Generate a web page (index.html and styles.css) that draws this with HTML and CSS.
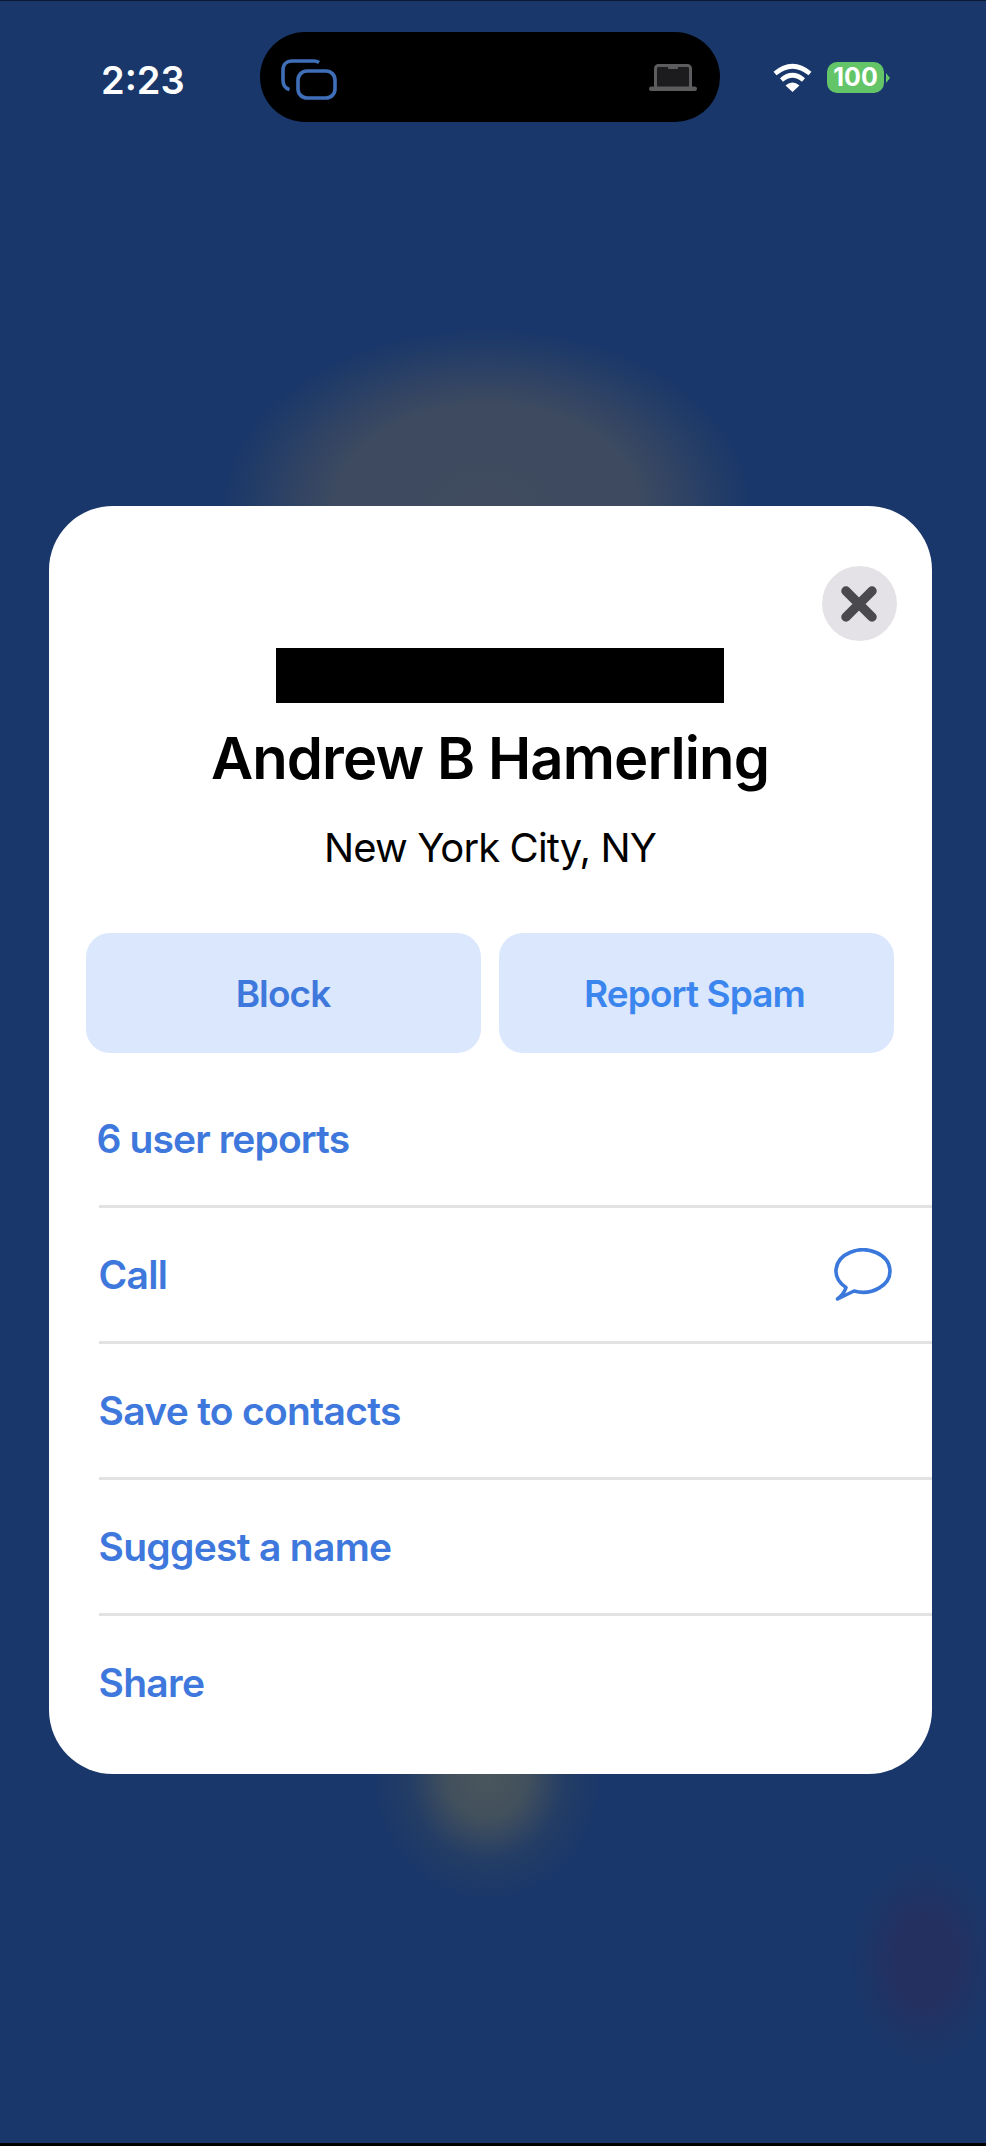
FILE: index.html
```html
<!DOCTYPE html>
<html lang="en">
<head>
    <meta charset="UTF-8">
    <title>Andrew B Hamerling</title>
    <link rel="stylesheet" href="styles.css">
</head>
<body>

<div class="screen">
    <div class="status-bar">
        <span class="time">2:23</span>
        <div class="island">
            <svg class="icon-windows" width="56" height="41" viewBox="0 0 56 41" fill="none" stroke="#3f6fb8" stroke-width="3.6">
                <path d="M38 3.5C36.5 2.4 35 2 33 2H11C5.5 2 2 5.5 2 11V21C2 26.5 4.5 29.5 8.5 30.5"/>
                <rect x="17" y="12" width="37" height="27" rx="9"/>
            </svg>
            <svg class="icon-laptop" width="48" height="27" viewBox="0 0 48 27">
                <path d="M6.5 23V4.5A3 3 0 0 1 9.5 1.5H38.5A3 3 0 0 1 41.5 4.5V23" fill="#1c1c1e" stroke="#5c5c5e" stroke-width="3"/>
                <rect x="19" y="2" width="10" height="3" rx="1" fill="#5c5c5e"/>
                <rect x="0" y="22.5" width="48" height="4.5" rx="2.2" fill="#5c5c5e"/>
            </svg>
        </div>
        <div class="status-right">
            <svg width="39" height="29" viewBox="0 0 39 29" fill="none" stroke="#fff" stroke-width="4.6">
                <path d="M2 10.5Q19.5 -4 37 10.5"/>
                <path d="M8.5 17Q19.5 7.5 30.5 17"/>
                <path d="M19.5 29L12.5 22.5Q19.5 16.5 26.5 22.5Z" fill="#fff" stroke="none"/>
            </svg>
            <div class="battery">100</div>
            <div class="battery-nub"></div>
        </div>
    </div>

    <div class="card">
        <div class="card-top">
            <button class="close-btn">
                <svg width="36" height="36" viewBox="0 0 36 36" stroke="#4a494e" stroke-width="9.5" stroke-linecap="round">
                    <path d="M5 5L31 31M31 5L5 31"/>
                </svg>
            </button>
        </div>
        <div class="redacted"></div>
        <h1 class="name">Andrew B Hamerling</h1>
        <p class="location">New York City, NY</p>
        <div class="actions">
            <button class="action-btn btn-block">Block</button>
            <button class="action-btn btn-spam">Report Spam</button>
        </div>
        <ul class="menu">
            <li class="menu-row reports">6 user reports</li>
            <li class="menu-row">
                Call
                <svg class="icon-chat" width="58" height="53" viewBox="0 0 58 53" fill="none" stroke="#3a78dc" stroke-width="3.6" stroke-linejoin="round">
                    <path d="M12 39.5A27 21.2 0 1 1 20 43L3.5 51Q10 46 12 39.5Z"/>
                </svg>
            </li>
            <li class="menu-row">Save to contacts</li>
            <li class="menu-row">Suggest a name</li>
            <li class="menu-row">Share</li>
        </ul>
    </div>
</div>

</body>
</html>
```

FILE: styles.css
```css
html, body { margin: 0; padding: 0; }
body { font-family: 'Inter', 'Liberation Sans', sans-serif; background: #000; }

.screen {
    box-sizing: border-box;
    height: 2146px;
    border-top: 1px solid #0b1a33;
    border-bottom: 3px solid #000;
    background-color: #19376a;
    background-image:
        radial-gradient(ellipse 265px 178px at 487px 506px, #404b5f 0%, #3d4a60 58%, rgba(25, 55, 106, 0) 100%),
        radial-gradient(ellipse 115px 125px at 487px 1775px, #4a565c 0%, #42505d 35%, rgba(38, 62, 100, 0.8) 68%, rgba(25, 55, 106, 0) 100%),
        radial-gradient(ellipse 75px 105px at 925px 1960px, #243060 0%, #243060 35%, rgba(25, 55, 106, 0) 100%);
}

.status-bar { display: flex; align-items: flex-start; padding-top: 31px; height: 505px; box-sizing: border-box; }
.time { width: 260px; box-sizing: border-box; padding-left: 101px; margin-top: 25px; font-size: 38px; line-height: 46px; font-weight: 600; color: #fff; }
.island { display: flex; justify-content: space-between; width: 460px; height: 90px; box-sizing: border-box; padding: 27px 23px 0 21px; border-radius: 45px; background: #000; }
.icon-laptop { margin-top: 5px; }
.status-right { display: flex; align-items: center; margin: 30px 0 0 53px; }
.battery { width: 57px; height: 31px; margin-left: 15px; border-radius: 10px; background: #63c568; color: #fff; font-size: 25px; font-weight: 700; line-height: 31px; text-align: center; }
.battery-nub { width: 0; height: 0; margin-left: 2px; border-left: 4px solid #63c568; border-top: 5px solid transparent; border-bottom: 5px solid transparent; }

.card { width: 883px; height: 1268px; margin: 0 0 0 48.5px; border-radius: 64px; background: #fff; overflow: hidden; }
.card-top { display: flex; justify-content: flex-end; padding: 60px 35px 0 0; }
.close-btn { display: flex; align-items: center; justify-content: center; width: 75px; height: 75px; padding: 0; border: none; border-radius: 50%; background: #e4e2e6; }

.redacted { width: 448px; height: 55px; margin: 7px 0 0 227.5px; background: #000; }
.name { margin: 20px 0 0; font-size: 58px; line-height: 70px; font-weight: 600; letter-spacing: -0.9px; color: #000; text-align: center; }
.location { margin: 30px 0 0; font-size: 40px; line-height: 50px; font-weight: 400; letter-spacing: -0.9px; color: #000; text-align: center; }

.actions { display: flex; gap: 18px; margin: 60px 37px 0; }
.action-btn { width: 395px; height: 120px; padding: 0; border: none; border-radius: 24px; background: #dbe7fd; font-family: inherit; font-size: 37px; font-weight: 600; letter-spacing: -0.9px; }
.btn-block { color: #3e78dc; }
.btn-spam { padding-right: 3px; color: #3b86ee; }

.menu { list-style: none; margin: 19px 0 0; padding: 0; }
.menu-row { display: flex; align-items: center; justify-content: space-between; box-sizing: border-box; height: 136px; margin-left: 50px; padding-right: 40px; border-bottom: 3px solid #e2e2e4; color: #3e78dc; font-size: 39px; font-weight: 600; letter-spacing: -0.7px; }
.menu-row:last-child { border-bottom-color: transparent; }
.reports { text-indent: -2px; letter-spacing: -0.9px; }
```
